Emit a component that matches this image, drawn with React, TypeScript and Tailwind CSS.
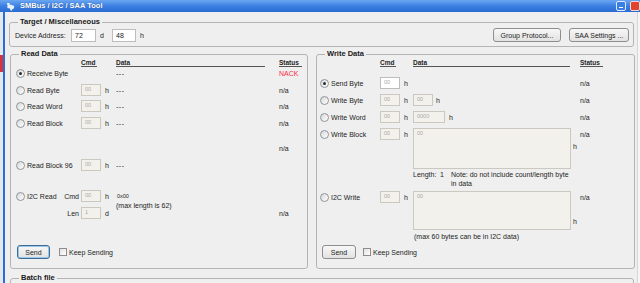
import React from "react";

const Radio = ({ checked }: { checked?: boolean }) => (
  <span className="w-[9px] h-[9px] shrink-0 rounded-full border border-[#8e959c] bg-linear-to-br from-[#d8d8d8] to-white flex items-center justify-center">
    {checked && <span className="w-[3px] h-[3px] rounded-full bg-[#2c2c2c]" />}
  </span>
);

const Field = ({
  className,
  children,
  enabled,
  dark,
}: {
  className?: string;
  children?: React.ReactNode;
  enabled?: boolean;
  dark?: boolean;
}) => (
  <span
    className={`h-[12px] shrink-0 border flex items-center pl-[3px] ${
      dark ? "text-[7px] text-[#222]" : "text-[5.5px] text-[#a8a8a8]"
    } ${enabled ? "bg-white border-[#bdbdbd]" : "bg-[#f3f1ec] border-[#cbc8bf]"} ${className}`}
  >
    {children}
  </span>
);

const Button = ({ children, className }: { children: React.ReactNode; className?: string }) => (
  <div
    className={`h-[14px] flex items-center justify-center rounded-[3px] border bg-linear-to-b from-[#f7f7f7] to-[#e2e2e2] ${className}`}
  >
    {children}
  </div>
);

const Check = () => (
  <span className="block w-[8px] h-[8px] border border-[#8c8c8c] bg-linear-to-br from-[#e2e2e2] to-white shrink-0" />
);

const Group = ({
  title,
  className,
  children,
}: {
  title: string;
  className?: string;
  children?: React.ReactNode;
}) => (
  <fieldset className={`border border-[#b4b4b4] rounded-[3px] min-w-0 ${className}`}>
    <legend className="ml-[8px] px-[2px] h-[10px] leading-[10px] text-[7.5px] font-bold text-[#1a1a1a]">
      {title}
    </legend>
    {children}
  </fieldset>
);

const ReadRow = ({
  label,
  checked,
  cmd,
  data,
  status,
  statusClass,
  className,
}: {
  label?: string;
  checked?: boolean;
  cmd?: boolean;
  data?: string;
  status?: string;
  statusClass?: string;
  className?: string;
}) => (
  <div className={`flex items-center h-[12px] ${className}`}>
    <div className="w-[65px] flex items-center gap-[2px]">
      {label && (
        <>
          <Radio checked={checked} />
          <span>{label}</span>
        </>
      )}
    </div>
    <div className="w-[35px] flex items-center">
      {cmd && (
        <>
          <Field className="w-[20px]">00</Field>
          <span className="ml-[4px]">h</span>
        </>
      )}
    </div>
    <div className="w-[163px] tracking-[0.5px]">{data}</div>
    <div className={statusClass}>{status}</div>
  </div>
);

const WriteRow = ({
  label,
  checked,
  enabled,
  data,
  className,
}: {
  label: string;
  checked?: boolean;
  enabled?: boolean;
  data?: React.ReactNode;
  className?: string;
}) => (
  <div className={`flex items-center h-[12px] ${className}`}>
    <div className="w-[60px] flex items-center gap-[2px]">
      <Radio checked={checked} />
      <span>{label}</span>
    </div>
    <div className="w-[33px] flex items-center">
      <Field className="w-[20px]" enabled={enabled}>
        00
      </Field>
      <span className="ml-[4px]">h</span>
    </div>
    <div className="w-[167px] flex items-center">{data}</div>
    <div>n/a</div>
  </div>
);

export default function App() {
  return (
    <div className="w-[640px] h-[283px] overflow-hidden flex flex-col bg-[#f4f4f4] text-[7px] leading-none text-[#242424] font-['Liberation_Sans',Arial,sans-serif]">
      {/* title bar */}
      <div className="h-[12px] shrink-0 flex items-center bg-linear-to-b from-[#6aa6f2] via-[#3c80e2] to-[#2a6bd2]">
        <svg width="9" height="9" viewBox="0 0 10 10" className="ml-[6px]">
          <path
            d="M1 1h3v2h2l1 1 2 0v3l-2 1-1 2-1-1-1-2-2 0-1-2h1z"
            fill="#e9f1ff"
          />
        </svg>
        <span className="ml-[5px] text-[7.5px] font-bold text-white [text-shadow:0_0_1px_#1a3f80]">
          SMBus / I2C / SAA Tool
        </span>
        <div className="flex-1" />
        <div className="w-[10px] h-[10px] rounded-[2px] border border-[#dfe9fb] bg-[#3a7fe6] flex items-end justify-start pl-[2px] pb-[2px]">
          <span className="w-[4px] h-[1px] bg-white" />
        </div>
        <div className="ml-[4px] w-[10px] h-[10px] rounded-[2px] border border-[#f3d6d0] bg-[#e0442f] shrink-0" />
      </div>

      <div className="flex flex-1 min-h-0">
        {/* left edge */}
        <div className="w-[5px] flex shrink-0">
          <div className="w-[3px] flex flex-col bg-[#e3e8ef]">
            <div className="h-[43px]" />
            <div className="h-[17px] bg-[#d9343a]" />
          </div>
          <div className="w-[2px] bg-[#2c6ed6]" />
        </div>

        {/* body */}
        <div className="w-[632px] shrink-0 bg-[#efefef] flex flex-col">
          <Group title="Target / Miscellaneous" className="mt-[5px] ml-[4px] w-[625px] pb-[4px]">
            <div className="flex items-center h-[14px] mt-[1px] pl-[5px] pr-[4px]">
              <span className="w-[56px]">Device Address:</span>
              <Field enabled dark className="w-[25px] h-[13px]">
                72
              </Field>
              <span className="w-[16px] pl-[4px]">d</span>
              <Field enabled dark className="w-[24px] h-[13px]">
                48
              </Field>
              <span className="pl-[4px]">h</span>
              <div className="flex-1" />
              <Button className="w-[68px] border-[#8e8e8e]">Group Protocol...</Button>
              <Button className="w-[60px] ml-[8px] border-[#8e8e8e]">SAA Settings ...</Button>
            </div>
          </Group>

          <div className="flex mt-[2px]">
            {/* read data */}
            <Group title="Read Data" className="ml-[5px] w-[298px] pb-[9px]">
              <div className="flex flex-col pl-[5px]">
                <div className="flex h-[8px] font-bold text-[6.5px] leading-[7px]">
                  <div className="w-[65px]" />
                  <div className="w-[16px] border-b border-[#555]">Cmd</div>
                  <div className="w-[19px]" />
                  <div className="w-[149px] border-b border-[#555]">Data</div>
                  <div className="w-[14px]" />
                  <div className="w-[23px] border-b border-[#555]">Status</div>
                </div>
                <ReadRow
                  label="Receive Byte"
                  checked
                  data="---"
                  status="NACK"
                  statusClass="text-[#ff2a48]"
                />
                <ReadRow label="Read Byte" cmd data="---" status="n/a" className="mt-[5px]" />
                <ReadRow label="Read Word" cmd data="---" status="n/a" className="mt-[4px]" />
                <ReadRow label="Read Block" cmd data="---" status="n/a" className="mt-[5px]" />
                <ReadRow status="n/a" className="mt-[13px]" />
                <ReadRow label="Read Block 96" cmd data="---" className="mt-[5px]" />

                <div className="flex items-start h-[12px] mt-[19px]">
                  <div className="w-[65px] h-[12px] flex items-center justify-between pr-[2px]">
                    <span className="flex items-center gap-[2px]">
                      <Radio />
                      <span>I2C Read</span>
                    </span>
                    <span>Cmd</span>
                  </div>
                  <div className="w-[35px] h-[12px] flex items-center">
                    <Field className="w-[20px]">00</Field>
                    <span className="ml-[4px]">h</span>
                  </div>
                  <div className="flex flex-col">
                    <span className="leading-[12px] text-[5.5px] pl-[1px]">0x00</span>
                    <span className="leading-[8px]">(max length is 62)</span>
                  </div>
                </div>
                <div className="flex items-center h-[12px] mt-[5px]">
                  <div className="w-[65px] flex justify-end pr-[2px]">Len</div>
                  <div className="w-[35px] flex items-center">
                    <Field className="w-[20px]">1</Field>
                    <span className="ml-[4px]">d</span>
                  </div>
                  <div className="w-[163px]" />
                  <div>n/a</div>
                </div>

                <div className="flex items-center h-[14px] mt-[26px]">
                  <Button className="w-[33px] ml-[1px] border-[#3b6d96] shadow-[inset_0_0_0_1px_#9cc6ea]">
                    Send
                  </Button>
                  <span className="ml-[9px]">
                    <Check />
                  </span>
                  <span className="ml-[2px]">Keep Sending</span>
                </div>
              </div>
            </Group>

            {/* write data */}
            <Group title="Write Data" className="ml-[8px] w-[319px] pb-[9px]">
              <div className="flex flex-col pl-[3px]">
                <div className="flex h-[8px] font-bold text-[6.5px] leading-[7px]">
                  <div className="w-[60px]" />
                  <div className="w-[16px] border-b border-[#555]">Cmd</div>
                  <div className="w-[17px]" />
                  <div className="w-[157px] border-b border-[#555]">Data</div>
                  <div className="w-[10px]" />
                  <div className="w-[23px] border-b border-[#555]">Status</div>
                </div>
                <WriteRow label="Send Byte" checked enabled className="mt-[10px]" />
                <WriteRow
                  label="Write Byte"
                  className="mt-[5px]"
                  data={
                    <>
                      <Field className="w-[20px]">00</Field>
                      <span className="ml-[3px]">h</span>
                    </>
                  }
                />
                <WriteRow
                  label="Write Word"
                  className="mt-[5px]"
                  data={
                    <>
                      <Field className="w-[32px]">0000</Field>
                      <span className="ml-[4px]">h</span>
                    </>
                  }
                />

                <div className="flex items-start mt-[5px]">
                  <div className="w-[60px] h-[12px] flex items-center gap-[2px]">
                    <Radio />
                    <span>Write Block</span>
                  </div>
                  <div className="w-[33px] h-[12px] flex items-center">
                    <Field className="w-[20px]">00</Field>
                    <span className="ml-[4px]">h</span>
                  </div>
                  <div className="w-[167px] flex flex-col">
                    <div className="flex items-start">
                      <div className="w-[158px] h-[41px] border border-[#cbc8bf] bg-[#f3f1ec] pl-[3px] pt-[2px] text-[5.5px] text-[#a8a8a8]">
                        00
                      </div>
                      <span className="ml-[2px] mt-[14px] leading-[9px]">h</span>
                    </div>
                    <div className="flex mt-[1px] leading-[9px]">
                      <span className="w-[27px]">Length:</span>
                      <span className="w-[11px]">1</span>
                      <span>
                        Note: do not include count/length byte
                        <br />
                        in data
                      </span>
                    </div>
                  </div>
                  <div className="h-[12px] flex items-center">n/a</div>
                </div>

                <div className="flex items-start mt-[3px]">
                  <div className="w-[60px] h-[12px] flex items-center gap-[2px]">
                    <Radio />
                    <span>I2C Write</span>
                  </div>
                  <div className="w-[33px] h-[12px] flex items-center">
                    <Field className="w-[20px]">00</Field>
                    <span className="ml-[4px]">h</span>
                  </div>
                  <div className="w-[167px] flex flex-col">
                    <div className="flex items-start">
                      <div className="w-[158px] h-[39px] border border-[#cbc8bf] bg-[#f3f1ec] pl-[3px] pt-[2px] text-[5.5px] text-[#a8a8a8]">
                        00
                      </div>
                      <span className="ml-[2px] mt-[26px] leading-[9px]">h</span>
                    </div>
                    <span className="mt-[2px] leading-[9px] pl-[1px]">
                      (max 60 bytes can be in I2C data)
                    </span>
                  </div>
                  <div className="h-[12px] flex items-center">n/a</div>
                </div>

                <div className="flex items-center h-[14px] mt-[4px]">
                  <Button className="w-[34px] ml-[2px] border-[#8e8e8e]">Send</Button>
                  <span className="ml-[7px]">
                    <Check />
                  </span>
                  <span className="ml-[2px]">Keep Sending</span>
                </div>
              </div>
            </Group>
          </div>

          <Group title="Batch file" className="mt-[4px] ml-[5px] w-[624px] h-[40px] shrink-0" />
        </div>

        {/* right edge */}
        <div className="flex-1 bg-[#f6f6f6] border-l border-[#d6d6d6]" />
      </div>
    </div>
  );
}
